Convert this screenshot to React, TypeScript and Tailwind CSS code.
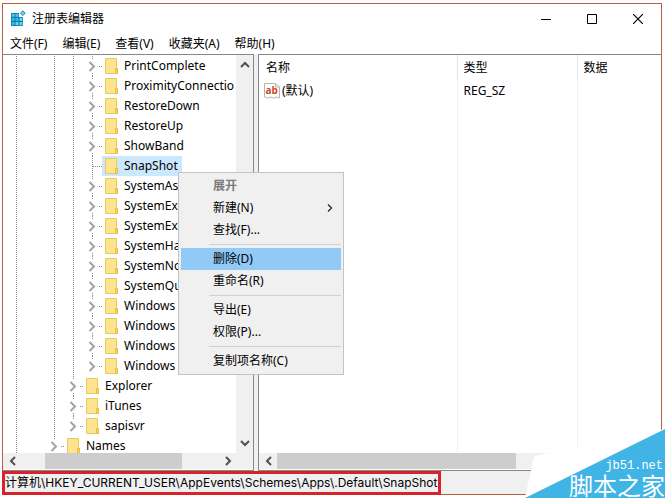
import type { ReactNode } from "react";

interface TreeNode {
  name: string;
  guides: boolean[];
  selected?: boolean;
  last?: boolean;
}

const DEEP = [true, false, true, true];
const MID = [true, false, true];

const NODES: TreeNode[] = [
  { name: "PrintComplete", guides: DEEP },
  { name: "ProximityConnectio", guides: DEEP },
  { name: "RestoreDown", guides: DEEP },
  { name: "RestoreUp", guides: DEEP },
  { name: "ShowBand", guides: DEEP },
  { name: "SnapShot", guides: DEEP, selected: true },
  { name: "SystemAs", guides: DEEP },
  { name: "SystemEx", guides: DEEP },
  { name: "SystemEx", guides: DEEP },
  { name: "SystemHa", guides: DEEP },
  { name: "SystemNo", guides: DEEP },
  { name: "SystemQu", guides: DEEP },
  { name: "Windows", guides: DEEP },
  { name: "Windows", guides: DEEP },
  { name: "Windows", guides: DEEP },
  { name: "Windows", guides: DEEP, last: true },
  { name: "Explorer", guides: MID },
  { name: "iTunes", guides: MID },
  { name: "sapisvr", guides: MID, last: true },
  { name: "Names", guides: [true, false], last: true },
];

const MENU_BAR = ["文件(F)", "编辑(E)", "查看(V)", "收藏夹(A)", "帮助(H)"];

const CONTEXT_GROUPS = [
  ["展开", "新建(N)", "查找(F)..."],
  ["删除(D)", "重命名(R)"],
  ["导出(E)", "权限(P)..."],
  ["复制项名称(C)"],
];

// ── Icons ───────────────────────────────────────────────────────────────────────
function AppIcon() {
  return (
    <svg width="16" height="17" viewBox="0 0 16 17">
      <path d="M1 3h8v4h4v9H1z" fill="#0b76a8" />
      <path d="M1.7 3.7h3v3h-3zM5.5 3.7h3v3h-3z" fill="#4fc3ea" />
      <path d="M1.7 7.7h3v3.3h-3zM5.5 7.7h3v3.3h-3zM1.7 12h3v3.3h-3z" fill="#35b6e6" />
      <path d="M9.5 7.7h3v3.3h-3zM5.5 12h3v3.3h-3zM9.5 12h3v3.3h-3z" fill="#5bd6f5" />
      <path d="M12.8 .8 15.2 3.2 12.8 5.6 10.4 3.2z" fill="#7ccbe6" stroke="#2088b4" />
    </svg>
  );
}

function FolderIcon() {
  return (
    <svg width="13" height="16" viewBox="0 0 13 16" className="shrink-0">
      <path d="M.5.5h11v9l1 1v5H.5z" fill="#ffe48f" stroke="#e9c95c" />
      <path d="M10.5 10.5h2v5h-2z" fill="#ffd966" stroke="#e6bd3c" />
    </svg>
  );
}

function StringIcon() {
  return (
    <svg width="16" height="16" viewBox="0 0 16 16" className="shrink-0">
      <path d="M.5.5h11l4 3.5v11l-3-1-3 1.3-3-1.3-3 1-3-1.2z" fill="#fff" stroke="#b4b4b4" />
      <path d="M11.5.5V4h4" fill="none" stroke="#b4b4b4" />
      <text x="1.5" y="11" fontSize="10" fontWeight="700" fill="#c8492c" fontFamily="Open Sans, sans-serif">
        ab
      </text>
    </svg>
  );
}

function Arrow({ d }: { d: string }) {
  return (
    <svg width="10" height="10" viewBox="0 0 10 10" fill="none" stroke="#505050" strokeWidth="2">
      <path d={d} />
    </svg>
  );
}

const LEFT = "M7 1 3 5l4 4";
const RIGHT = "M3 1l4 4-4 4";
const UP = "M1 7l4-4 4 4";
const DOWN = "M1 3l4 4 4-4";

// ── Tree ────────────────────────────────────────────────────────────────────────
function Guide({ line }: { line: boolean }) {
  return (
    <svg width="19" height="20" className="shrink-0" shapeRendering="crispEdges">
      {line && <path d="M9.5 0v20" stroke="#8a8a8a" strokeDasharray="1 1" />}
    </svg>
  );
}

function Branch({ leaf, last }: { leaf?: boolean; last?: boolean }) {
  return (
    <svg width="19" height="20" className="shrink-0" fill="none">
      <g stroke="#8a8a8a" strokeDasharray="1 1" shapeRendering="crispEdges">
        <path d={last ? "M9.5 0v4" : leaf ? "M9.5 0v20" : "M9.5 0v4M9.5 17v3"} />
        <path d={leaf ? "M10 10.5h9" : "M16 10.5h3"} />
      </g>
      {!leaf && <path d="M6.5 6l4.5 4.5L6.5 15" stroke="#a3a3a3" strokeWidth="2" />}
    </svg>
  );
}

function TreeRow({ node }: { node: TreeNode }) {
  return (
    <li className="flex h-5">
      {node.guides.map((line, i) => (
        <Guide key={i} line={line} />
      ))}
      <Branch leaf={node.selected} last={node.last} />
      <button className={`flex h-5 items-center gap-1.5 pr-1 pl-[3px] whitespace-nowrap ${node.selected ? "bg-[#cce8ff]" : ""}`}>
        <FolderIcon />
        {node.name}
      </button>
    </li>
  );
}

function ScrollButton({ label, children }: { label: string; children: ReactNode }) {
  return (
    <button aria-label={label} className="flex size-4 shrink-0 items-center justify-center">
      {children}
    </button>
  );
}

function TreePane() {
  return (
    <div className="flex w-[251px] shrink-0 flex-col border-y border-r border-[#828790] bg-white pb-px">
      <div className="flex min-h-0 flex-1">
        <ul className="min-w-0 flex-1 overflow-hidden pt-px pl-1">
          {NODES.map((n, i) => (
            <TreeRow key={i} node={n} />
          ))}
        </ul>
        <div className="flex w-[17px] flex-col items-center justify-between bg-[#f0f0f0] py-0.5">
          <ScrollButton label="Up"><Arrow d={UP} /></ScrollButton>
          <ScrollButton label="Down"><Arrow d={DOWN} /></ScrollButton>
        </div>
      </div>
      <div className="flex h-4 items-center bg-[#f0f0f0] pr-[17px] pl-0.5">
        <ScrollButton label="Left"><Arrow d={LEFT} /></ScrollButton>
        <div className="flex h-full flex-1 pl-6">
          <div className="w-[137px] bg-[#cdcdcd]" />
        </div>
        <ScrollButton label="Right"><Arrow d={RIGHT} /></ScrollButton>
      </div>
    </div>
  );
}

// ── Value list ──────────────────────────────────────────────────────────────────
function ListPane() {
  return (
    <div className="flex min-w-0 flex-1 flex-col border-y border-l border-[#828790] bg-white pb-px">
      <div className="min-h-0 flex-1">
        <table className="h-full w-full table-fixed text-left">
          <colgroup>
            <col className="w-[198px]" />
            <col className="w-[120px]" />
            <col />
          </colgroup>
          <thead>
            <tr className="h-[25px]">
              <th className="pl-[7px] font-normal">名称</th>
              <th className="border-l border-[#dfe3ea] pl-1.5 font-normal">类型</th>
              <th className="border-l border-[#dfe3ea] pl-1.5 font-normal">数据</th>
            </tr>
          </thead>
          <tbody>
            <tr className="h-[22px]">
              <td className="pl-[5px]">
                <div className="flex items-center gap-0.5"><StringIcon />(默认)</div>
              </td>
              <td className="border-l border-[#eff3f9] pl-1.5">REG_SZ</td>
              <td className="border-l border-[#eff3f9]" />
            </tr>
            <tr>
              <td />
              <td className="border-l border-[#eff3f9]" />
              <td className="border-l border-[#eff3f9]" />
            </tr>
          </tbody>
        </table>
      </div>
      <div className="flex h-4 items-center bg-[#f0f0f0] pl-0.5">
        <ScrollButton label="Left"><Arrow d={LEFT} /></ScrollButton>
        <div className="h-full flex-1 pr-[129px]">
          <div className="h-full bg-[#cdcdcd]" />
        </div>
        <ScrollButton label="Right"><Arrow d={RIGHT} /></ScrollButton>
      </div>
    </div>
  );
}

// ── Context menu ────────────────────────────────────────────────────────────────
function ContextMenu() {
  return (
    <div role="menu" className="absolute top-[172px] left-[178px] w-[166px] border border-[#c3c3c3] bg-[#f0f0f0] p-0.5">
      {CONTEXT_GROUPS.map((items, g) => (
        <div key={g}>
          {g > 0 && <div className="my-[3px] ml-7 h-px bg-[#d0d0d0]" />}
          {items.map((label) => (
            <button
              key={label}
              role="menuitem"
              disabled={label === "展开"}
              className={`flex h-[22px] w-full items-center justify-between pr-2 pl-8 ${
                label === "展开" ? "font-bold text-[#7a7a7a]" : ""
              } ${label === "删除(D)" ? "bg-[#91c9f7]" : ""}`}
            >
              {label}
              {label === "新建(N)" && (
                <svg width="6" height="8" viewBox="0 0 6 8" fill="none" stroke="#222" strokeWidth="1.2">
                  <path d="M1 .5 4.5 4 1 7.5" />
                </svg>
              )}
            </button>
          ))}
        </div>
      ))}
    </div>
  );
}

function Watermark() {
  return (
    <div className="absolute right-0 bottom-0 h-[69px] w-[140px]">
      <svg width="140" height="69" viewBox="0 0 140 69" className="absolute inset-0">
        <path d="M9 27 140 0v69H0z" fill="#fff" />
        <path d="M0 69 140 0v69z" fill="#41b4e6" />
      </svg>
      <div className="relative flex h-full flex-col items-end justify-end text-white">
        <span className="pr-0.5 font-['Liberation_Mono',monospace] text-xs leading-3">jb51.net</span>
        <span className="font-['Noto_Sans_CJK_SC',sans-serif] text-2xl leading-[26px]">脚本之家</span>
      </div>
    </div>
  );
}

export default function App() {
  return (
    <div className="relative h-screen overflow-hidden bg-white pt-[3px] pr-[3px] pb-[3px] pl-0.5 font-['Noto_Sans','Noto_Sans_CJK_SC',sans-serif] text-xs text-black">
      <div className="flex h-full flex-col border border-[#b5603c]">
        <header className="flex h-[29px] shrink-0 items-center pl-[7px]">
          <AppIcon />
          <h1 className="flex-1 pl-1.5">注册表编辑器</h1>
          <button aria-label="Minimize" className="flex w-[46px] justify-center">
            <svg width="10" height="10" stroke="#000"><path d="M0 5.5h10" /></svg>
          </button>
          <button aria-label="Maximize" className="flex w-[46px] justify-center">
            <svg width="10" height="10" stroke="#000" fill="none"><path d="M.5.5h9v9h-9z" /></svg>
          </button>
          <button aria-label="Close" className="flex w-[46px] justify-center">
            <svg width="10" height="10" stroke="#000" strokeWidth="1.2"><path d="M0 0l10 10M10 0 0 10" /></svg>
          </button>
        </header>
        <nav className="flex h-[21px] shrink-0 items-center gap-[15px] pl-[7px]">
          {MENU_BAR.map((m) => (
            <button key={m}>{m}</button>
          ))}
        </nav>
        <main className="flex min-h-0 flex-1 gap-1 bg-[#f0f0f0]">
          <TreePane />
          <ListPane />
        </main>
        <footer className="-mb-px -ml-px flex h-6 shrink-0 border-b border-[#b5603c] bg-[#f0f0f0]">
          <div className="-mb-px flex items-center border-3 border-[#d8232a] pr-px font-['Inter','Noto_Sans_CJK_SC',sans-serif] leading-4 whitespace-nowrap">
            计算机\HKEY_CURRENT_USER\AppEvents\Schemes\Apps\.Default\SnapShot
          </div>
        </footer>
      </div>
      <ContextMenu />
      <Watermark />
    </div>
  );
}
